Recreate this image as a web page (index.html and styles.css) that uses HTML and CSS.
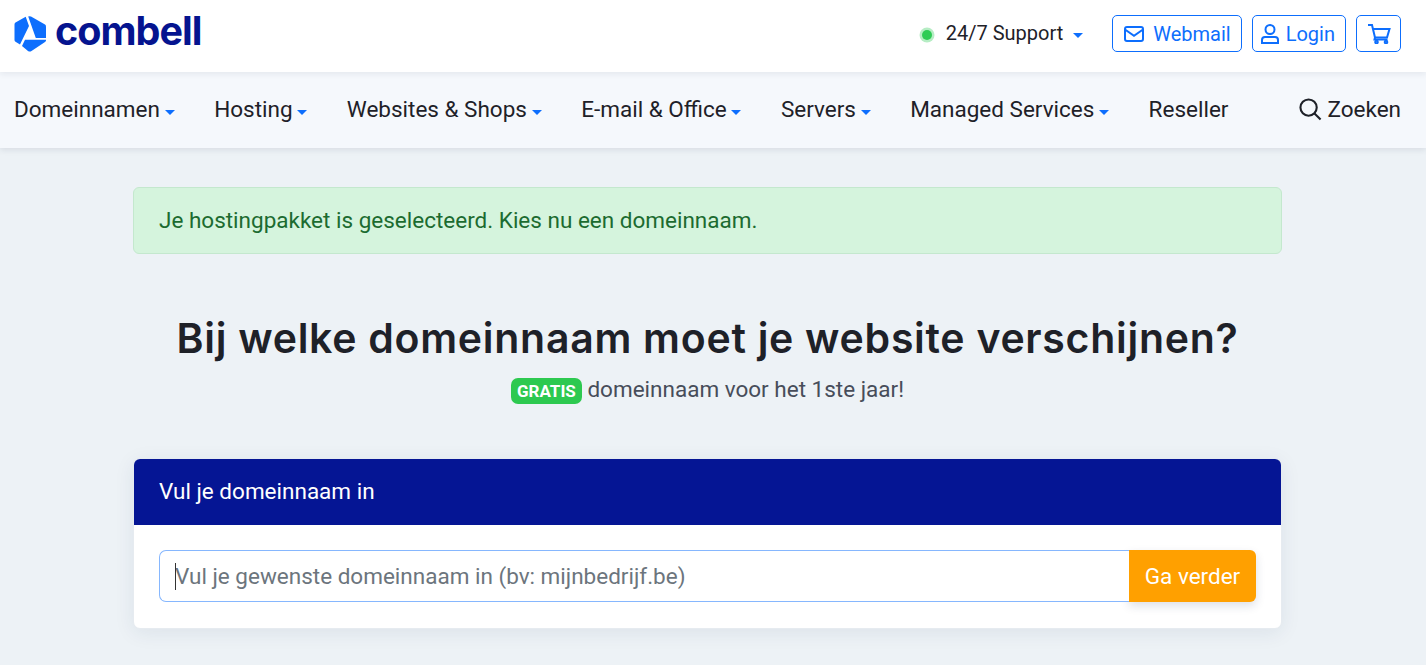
FILE: index.html
```html
<!DOCTYPE html>
<html lang="nl">
<head>
<meta charset="utf-8">
<title>Combell</title>
<link rel="stylesheet" href="styles.css">
</head>
<body>
<header class="topbar">
  <a class="logo" href="#">
    <svg class="logo-mark" viewBox="0 0 33 36" width="33" height="36" aria-hidden="true">
      <path fill="#0d6efd" d="M11.7 0.8 L1.5 6.6 Q0.5 7.2 0.5 8.5 V24 Q0.5 25.2 1.5 25.8 L6 28.5 L15 10 Z"/>
      <path fill="#0d6efd" d="M14.2 0.4 Q15.5 -0.1 17 0.6 L31 8.6 Q32 9.2 32 10.5 V22 H21.8 Z"/>
      <path fill="#0d6efd" d="M8 30 L11 23.8 H32 V24.5 Q32 25.4 31 26 L17.5 35 Q15.8 36 14 35 Z"/>
    </svg>
    <span class="logo-text">combell</span>
  </a>
  <div class="top-actions">
    <div class="support">
      <span class="status-dot"></span>
      <span class="support-label">24/7 Support</span>
      <span class="caret caret-support"></span>
    </div>
    <a class="btn-outline btn-webmail" href="#">
      <svg class="ic ic-mail" viewBox="0 0 20 16" aria-hidden="true"><rect x="1" y="1" width="18" height="14" rx="2"/><path d="M1 3.5 L10 9.8 L19 3.5"/></svg>
      Webmail
    </a>
    <a class="btn-outline btn-login" href="#">
      <svg class="ic ic-user" viewBox="0 0 18 20" aria-hidden="true"><circle cx="9" cy="5.5" r="4.5"/><path d="M1 19 V16 Q1 13 4 13 H14 Q17 13 17 16 V19 Z"/></svg>
      Login
    </a>
    <a class="btn-outline btn-cart" href="#" aria-label="Winkelwagen">
      <svg class="ic ic-cart" viewBox="0 0 24 20" aria-hidden="true"><path d="M1 1 H5 L8 13.5 H20 L22.5 5 H5.8"/><path d="M8 13.5 L7.5 15.5 H20.5"/><circle cx="9.5" cy="18" r="1.3"/><circle cx="19" cy="18" r="1.3"/></svg>
    </a>
  </div>
</header>
<nav class="mainnav">
  <a class="nav-item" href="#">Domeinnamen<span class="caret"></span></a>
  <a class="nav-item" href="#">Hosting<span class="caret"></span></a>
  <a class="nav-item" href="#">Websites &amp; Shops<span class="caret"></span></a>
  <a class="nav-item" href="#">E-mail &amp; Office<span class="caret"></span></a>
  <a class="nav-item" href="#">Servers<span class="caret"></span></a>
  <a class="nav-item" href="#">Managed Services<span class="caret"></span></a>
  <a class="nav-item" href="#">Reseller</a>
  <a class="nav-item nav-search" href="#">
    <svg class="ic-search" viewBox="0 0 24 24" aria-hidden="true"><circle cx="10" cy="10" r="8.5"/><path d="M16.2 16.2 L22.5 22.5"/></svg>
    Zoeken
  </a>
</nav>
<main class="content">
  <div class="alert">Je hostingpakket is geselecteerd. Kies nu een domeinnaam.</div>
  <h1 class="title">Bij welke domeinnaam moet je website verschijnen?</h1>
  <p class="subtitle"><span class="badge">GRATIS</span> domeinnaam voor het 1ste jaar!</p>
  <section class="card">
    <div class="card-head">Vul je domeinnaam in</div>
    <form class="card-body">
      <div class="field">
        <input class="domain-input" type="text" placeholder="Vul je gewenste domeinnaam in (bv: mijnbedrijf.be)">
        <span class="text-caret"></span>
      </div>
      <button class="go" type="button">Ga verder</button>
    </form>
  </section>
</main>
</body>
</html>
```
FILE: styles.css
```css
* { box-sizing: border-box; }
html, body { margin: 0; height: 100%; }
body {
  background: #edf2f6;
  font-family: Roboto, "Liberation Sans", sans-serif;
  color: #1e2128;
  overflow: hidden;
}
a { text-decoration: none; color: inherit; }

.topbar {
  height: 72px;
  background: #fff;
  display: flex;
  align-items: center;
  justify-content: space-between;
  padding: 0 25px 0 14px;
  position: relative;
  z-index: 2;
  box-shadow: 0 2px 6px rgba(30, 40, 70, .08);
}
.logo { display: flex; align-items: center; gap: 8px; height: 72px; margin-top: -4px; }
.logo-mark { display: block; }
.logo-text {
  font-family: Inter, sans-serif;
  font-weight: 700;
  font-size: 39.5px;
  letter-spacing: -1px;
  color: #05148f;
  line-height: 1;
  margin-top: -4px;
}
.top-actions { display: flex; align-items: center; margin-top: -5px; }
.support { display: flex; align-items: center; font-size: 20px; color: #1e2128; margin-right: 29px; }
.support-label { padding-bottom: 2px; }
.status-dot {
  width: 10px; height: 10px; border-radius: 50%;
  background: #2ecc55;
  box-shadow: 0 0 0 2.5px rgba(46, 204, 85, .35);
  margin-right: 14px;
  margin-top: 2px;
}
.caret {
  display: inline-block;
  width: 0; height: 0;
  border-left: 5px solid transparent;
  border-right: 5px solid transparent;
  border-top: 5px solid #0d6efd;
  margin-left: 4.6px;
  vertical-align: 2px;
}
.caret-support { margin-left: 10px; margin-top: 3px; }
.btn-outline {
  height: 37px;
  display: flex;
  align-items: center;
  border: 1px solid #0d6efd;
  border-radius: 5px;
  color: #0d6efd;
  font-size: 20px;
  margin-left: 10px;
}
.btn-webmail { padding: 0 10px 0 11px; gap: 9px; margin-left: 0; }
.btn-login { padding: 0 10px 0 8px; gap: 7px; }
.btn-cart { padding: 0 9px 0 10px; }
.ic { fill: none; stroke: #0d6efd; stroke-width: 2; display: block; }
.ic-mail { width: 20px; height: 16px; }
.ic-user { width: 18px; height: 20px; }
.ic-cart { width: 24px; height: 20px; }

.mainnav {
  height: 76px;
  background: #f5f8fc;
  display: flex;
  align-items: center;
  gap: 39.65px;
  padding: 0 25px 2px 14px;
  font-size: 22.5px;
  box-shadow: 0 2px 6px rgba(30, 40, 70, .1);
  position: relative;
  z-index: 1;
}
.nav-search { margin-left: auto; display: flex; align-items: center; gap: 5px; }
.ic-search { width: 23px; height: 23px; fill: none; stroke: #1e2128; stroke-width: 2.2; display: block; }

.content { width: 1149px; margin: 39px 0 0 133px; }
.alert {
  height: 67px;
  display: flex;
  align-items: center;
  padding: 0 25px 2px;
  background: #d5f4dd;
  border: 1px solid #c4e8ce;
  border-radius: 6px;
  color: #1c6b30;
  font-size: 22.5px;
}
.title {
  margin: 58px 0 0;
  text-align: center;
  font-family: Inter, sans-serif;
  font-weight: 600;
  font-size: 41px;
  letter-spacing: .72px;
  line-height: 52px;
  color: #1e2128;
}
.subtitle {
  margin: 9px 0 0;
  text-align: center;
  font-size: 22.5px;
  line-height: 32px;
  color: #474d5a;
}
.badge {
  display: inline-block;
  background: #2dc950;
  color: #fff;
  font-size: 17px;
  font-weight: 700;
  line-height: 26px;
  height: 26px;
  padding: 0 6px;
  border-radius: 7px;
}
.card {
  margin-top: 53px;
  background: #fff;
  border: 1px solid #e6ebf0;
  border-radius: 7px;
  box-shadow: 0 4px 20px rgba(30, 50, 90, .08);
  overflow: hidden;
}
.card-head {
  height: 66px;
  background: #051594;
  color: #fff;
  font-size: 22.5px;
  display: flex;
  align-items: center;
  padding: 0 25px 2px;
}
.card-body { display: flex; padding: 25px; height: 103px; }
.field { position: relative; flex: 1; display: flex; }
.domain-input {
  flex: 1;
  height: 52px;
  border: 1px solid #86b7fe;
  border-right: 0;
  border-radius: 7px 0 0 7px;
  padding: 0 15px;
  font-family: inherit;
  font-size: 22.5px;
  outline: none;
  background: #fff;
}
.domain-input::placeholder { color: #6c757d; opacity: 1; }
.text-caret { position: absolute; left: 16px; top: 13px; width: 1px; height: 27px; background: #333; }
.go {
  height: 52px;
  width: 127px;
  border: 0;
  background: #ffa000;
  color: #fff;
  font-family: inherit;
  font-size: 22.5px;
  border-radius: 0 6px 6px 0;
  box-shadow: 0 4px 10px rgba(30, 50, 90, .15);
}
```
